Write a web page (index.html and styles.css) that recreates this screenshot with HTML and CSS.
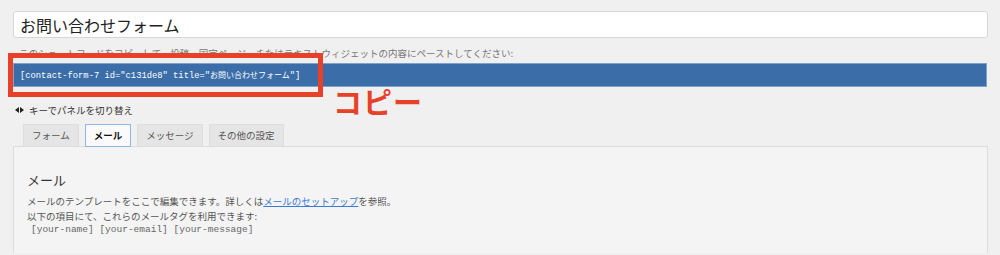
FILE: index.html
```html
<!DOCTYPE html>
<html lang="ja">
<head>
  <meta charset="UTF-8" />
  <link rel="stylesheet" href="styles.css">
</head>
<body>
  <div class="wrap">
    <input class="title-input" type="text" value="お問い合わせフォーム" />

    <div class="shortcode">
      <p class="shortcode-note">このショートコードをコピーして、投稿、固定ページ、またはテキストウィジェットの内容にペーストしてください:</p>
      <div class="shortcode-bar">[contact-form-7 id="c131de8" title="<span class="cjk">お問い合わせフォーム</span>"]</div>
      <div class="callout-box"></div>
      <div class="callout-label">コピー</div>
    </div>

    <p class="hint">
      <svg class="hint-icon" width="9" height="6" viewBox="0 0 9 6"><path d="M0 3 L4 0 L4 6 Z M5 0 L9 3 L5 6 Z" fill="#222"/></svg>
      キーでパネルを切り替え
    </p>

    <div class="tabs">
      <span class="tab">フォーム</span>
      <span class="tab active">メール</span>
      <span class="tab">メッセージ</span>
      <span class="tab">その他の設定</span>
    </div>

    <div class="panel">
      <h2>メール</h2>
      <p>メールのテンプレートをここで編集できます。詳しくは<a href="#">メールのセットアップ</a>を参照。<br>
      以下の項目にて、これらのメールタグを利用できます:</p>
      <p class="tags">[your-name] [your-email] [your-message]</p>
    </div>
  </div>
</body>
</html>
```

FILE: styles.css
```css
body {
  margin: 0;
  background: #f0f0f0;
  font-family: "Noto Sans CJK JP", "Noto Sans", sans-serif;
  color: #444;
}

.wrap {
  padding: 11px 12px 0 13px;
}

.title-input {
  display: block;
  box-sizing: border-box;
  width: 100%;
  height: 27px;
  margin: 0;
  padding: 0 6px;
  font-family: "Noto Sans CJK JP", sans-serif;
  font-size: 16px;
  color: #222;
  background: #fff;
  border: 1px solid #d6d6d6;
  border-radius: 3px;
  outline: none;
}

.shortcode {
  position: relative;
  margin-top: 8px;
}

.shortcode-note {
  margin: 0 0 3px 6px;
  font-size: 9.5px;
  line-height: 14px;
  color: #777;
}

.shortcode-bar {
  box-sizing: border-box;
  height: 24px;
  margin-right: 1px;
  padding-left: 6px;
  background: #3b6ea8;
  border: 1px solid #7fa2cc;
  color: #fff;
  font-family: "Liberation Mono", "Noto Sans CJK JP", monospace;
  font-size: 8.8px;
  line-height: 22px;
  white-space: nowrap;
}

.shortcode-bar .cjk {
  font-family: "Noto Sans CJK JP", sans-serif;
  font-size: 8px;
}

.callout-box {
  position: absolute;
  left: -5px;
  top: 7px;
  width: 315px;
  height: 44px;
  box-sizing: border-box;
  border: 5px solid #e8412a;
}

.callout-label {
  position: absolute;
  left: 320px;
  top: 41px;
  font-size: 29px;
  line-height: 28px;
  font-weight: 600;
  color: #e8412a;
  letter-spacing: 1px;
}

.hint {
  display: flex;
  align-items: center;
  gap: 5px;
  margin: 16px 0 0 2px;
  font-size: 9.5px;
  line-height: 14px;
  color: #333;
}

.tabs {
  display: flex;
  gap: 6px;
  margin-top: 7px;
  padding-left: 10px;
}

.tab {
  box-sizing: border-box;
  height: 23px;
  margin-bottom: -1px;
  padding: 0 8px;
  font-size: 9.5px;
  line-height: 21px;
  color: #555;
  background: #e5e5e5;
  border: 1px solid #dedede;
}

.tab.active {
  background: #fafafa;
  border-color: #8db6e4;
  color: #111;
  font-weight: 700;
}

.panel {
  height: 82px;
  padding: 24px 13px 0;
  background: #f4f4f4;
  border: 1px solid #dcdcdc;
  border-bottom: none;
}

.panel h2 {
  margin: 0 0 5px;
  font-size: 13px;
  line-height: 18px;
  font-weight: 400;
  color: #333;
}

.panel p {
  margin: 0;
  font-size: 9.5px;
  line-height: 14.7px;
  color: #555;
}

.panel a {
  color: #3a7bd5;
}

.panel .tags {
  padding-left: 4px;
  font-family: "Liberation Mono", monospace;
  font-size: 9.5px;
  color: #666;
}
```
